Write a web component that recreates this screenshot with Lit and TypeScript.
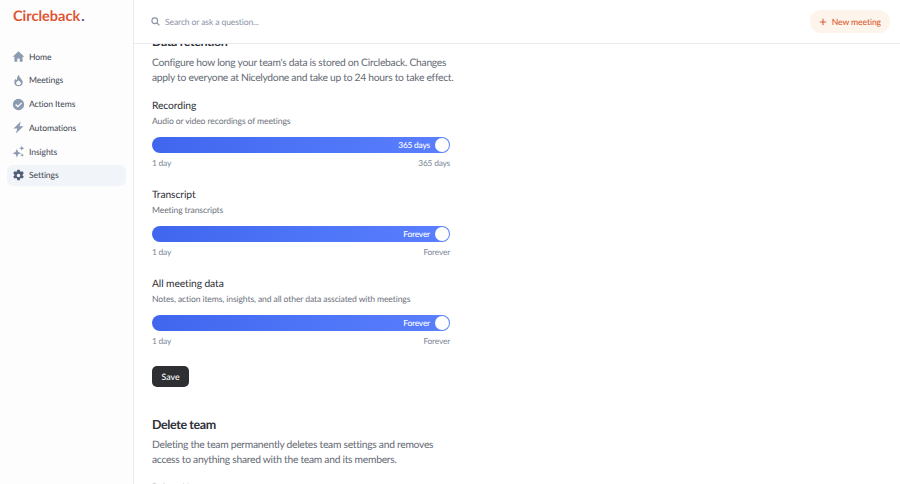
import { LitElement, css, html, svg } from 'lit';
import { customElement } from 'lit/decorators.js';

const navItems = [
  { label: 'Home', icon: svg`<path d="M8 1.500 .8 8.200h2.200V14.500h3.500v-4h3v4H13V8.200h2.200z"/>` },
  { label: 'Meetings', icon: svg`<path fill-rule="evenodd" d="M8.600 1c.3 2.300 1 3.200 2.200 4.500C12.200 7 13.200 8.200 13.200 10.200c0 3-2.300 4.900-5.200 4.900s-5.200-1.900-5.200-4.900c0-1.800.8-3.400 2-4.400.2 1 .6 1.600 1.300 2C6 5 6.800 2.500 8.600 1zM8 7.800c-.6 1.200-3 1.900-3 3.300 0 1.500 1.300 2.500 3 2.500s3-1 3-2.500c0-1.400-2.400-2.100-3-3.300z"/>` },
  { label: 'Action Items', icon: svg`<path fill-rule="evenodd" d="M8 1a7 7 0 1 1 0 14A7 7 0 0 1 8 1zm3.400 4.400L7.100 9.500 5 7.400 3.900 8.500l3.200 3.200 5.400-5.200z"/>` },
  { label: 'Automations', icon: svg`<path d="M10.800 .5 1.800 9.200h4.700L4.800 15.500 14.200 6.500H9.300z"/>` },
  { label: 'Insights', icon: svg`<path d="M6 4.500l1.600 4L11.500 10l-3.900 1.500L6 15.500l-1.600-4L.5 10l3.900-1.500zM12 .8l.9 2.300 2.300.9-2.300.9L12 7.200l-.9-2.300L8.800 4l2.300-.9zM12.500 10.300l.7 1.500 1.500.7-1.500.7-.7 1.500-.7-1.500-1.500-.7 1.500-.7z"/>` },
  { label: 'Settings', active: true, icon: svg`<path fill-rule="evenodd" d="M9.500 .8l.4 2c.4.200.8.400 1.100.6l2-.6 1.500 2.500-1.500 1.400c.1.400.1.800 0 1.200l1.500 1.400-1.500 2.500-2-.6c-.3.200-.7.400-1.100.6l-.4 2h-3l-.4-2c-.4-.2-.8-.4-1.100-.6l-2 .6-1.500-2.500 1.500-1.400c-.1-.4-.1-.8 0-1.200L1.500 5.300 3 2.800l2 .6c.3-.2.700-.4 1.100-.6l.4-2zM8 5.800a2.200 2.200 0 1 0 0 4.400 2.200 2.200 0 0 0 0-4.400z"/>` },
];

const retention = [
  { title: 'Recording', hint: 'Audio or video recordings of meetings', value: '365 days' },
  { title: 'Transcript', hint: 'Meeting transcripts', value: 'Forever' },
  { title: 'All meeting data', hint: 'Notes, action items, insights, and all other data assciated with meetings', value: 'Forever' },
];

@customElement('app-root')
export class AppRoot extends LitElement {
  static styles = css`
    :host {
      display: flex;
      width: 900px;
      height: 484px;
      overflow: hidden;
      background: #fff;
      font-family: 'Lato', 'Liberation Sans', sans-serif;
      color: #33363d;
      text-rendering: geometricPrecision;
    }

    .sidebar {
      flex: 0 0 134px;
      box-sizing: border-box;
      border-right: 1px solid #e8ebef;
      background: #fdfdfe;
      padding: 0 7px;
    }

    .logo {
      height: 46px;
      padding: 7px 0 0 6px;
      box-sizing: border-box;
      font-size: 14.500px;
      font-weight: 700;
      line-height: 20px;
      color: #df5430;
    }

    .logo span {
      margin-left: 1px;
      color: #46597a;
    }

    nav {
      display: flex;
      flex-direction: column;
      gap: 2.800px;
    }

    .item {
      display: flex;
      align-items: center;
      gap: 4px;
      height: 21px;
      padding: 0 5px;
      border-radius: 6px;
      font-size: 8.600px;
      letter-spacing: -0.1px;
      color: #434750;
    }

    .item svg {
      width: 13px;
      height: 13px;
      fill: #8d9bb0;
    }

    .item.active {
      background: #f1f4f9;
    }

    .item.active svg {
      fill: #4f5d75;
    }

    main {
      flex: 1;
      min-width: 0;
      display: flex;
      flex-direction: column;
    }

    header {
      flex: 0 0 44px;
      box-sizing: border-box;
      display: flex;
      align-items: center;
      justify-content: space-between;
      padding: 0 10px 0 17px;
      border-bottom: 1px solid #e8ebef;
      background: #fff;
      position: relative;
      z-index: 1;
    }

    .search {
      display: flex;
      align-items: center;
      gap: 5px;
      font-size: 8.600px;
      letter-spacing: -0.13px;
      color: #8b93a7;
    }

    .search svg {
      width: 9px;
      height: 9px;
      fill: none;
      stroke: #8b93a7;
      stroke-width: 1.500;
    }

    .new {
      display: flex;
      align-items: center;
      gap: 5px;
      height: 23px;
      padding: 0 9px;
      border-radius: 11.500px;
      background: #fdf4ec;
      color: #db5b30;
      font-size: 8.600px;
      font-weight: 500;
      letter-spacing: -0.1px;
    }

    .new svg {
      width: 8px;
      height: 8px;
      stroke: #db5b30;
      stroke-width: 1.300;
    }

    .scroll {
      flex: 1;
      min-height: 0;
      overflow: hidden;
      padding-left: 18px;
    }

    .content {
      width: 298px;
      margin-top: -12px;
    }

    h2 {
      margin: 0;
      font-size: 12.500px;
      font-weight: 700;
      line-height: 20px;
      letter-spacing: -0.4px;
      color: #2f3238;
    }

    .intro {
      margin: 4px -4px 0 0;
      font-size: 10.300px;
      line-height: 15px;
      letter-spacing: -0.28px;
      color: #666b75;
    }

    .group {
      margin-top: 18px;
    }

    .intro + .group {
      margin-top: 13px;
    }

    .group h3 {
      margin: 0;
      font-size: 10.300px;
      font-weight: 400;
      line-height: 14px;
      letter-spacing: -0.1px;
      color: #2f3238;
    }

    .hint {
      margin-top: 2px;
      font-size: 8.600px;
      line-height: 12px;
      letter-spacing: -0.115px;
      color: #6d727c;
    }

    .bar {
      display: flex;
      align-items: center;
      justify-content: flex-end;
      gap: 5px;
      height: 16px;
      margin-top: 10px;
      padding-right: 1px;
      border-radius: 8px;
      background: linear-gradient(90deg, #4066ee, #5a80ff);
      color: #fff;
      font-size: 8.400px;
      font-weight: 500;
      letter-spacing: -0.2px;
    }

    .knob {
      width: 14px;
      height: 14px;
      border-radius: 50%;
      background: #fff;
    }

    .scale {
      display: flex;
      justify-content: space-between;
      margin-top: 4px;
      font-size: 8.400px;
      line-height: 13px;
      letter-spacing: -0.2px;
      color: #7c8798;
    }

    .save {
      display: flex;
      align-items: center;
      justify-content: center;
      width: 37px;
      height: 21px;
      margin-top: 18px;
      border-radius: 5px;
      background: #2e2f33;
      color: #fff;
      font-size: 8.800px;
      font-weight: 500;
    }

    .delete {
      margin-top: 28px;
    }

    .delete .intro {
      margin-top: 3px;
    }

    .danger {
      margin-top: 13px;
      font-size: 8.600px;
      line-height: 12px;
      color: #4a3b3b;
    }
  `;

  render() {
    return html`
      <aside class="sidebar">
        <div class="logo">Circleback<span>.</span></div>
        <nav>
          ${navItems.map(
            (item) => html`
              <div class="item ${item.active ? 'active' : ''}">
                <svg viewBox="0 0 16 16">${item.icon}</svg>${item.label}
              </div>
            `,
          )}
        </nav>
      </aside>
      <main>
        <header>
          <div class="search">
            <svg viewBox="0 0 12 12"><circle cx="5" cy="5" r="3.800"/><path d="M8 8l3.200 3.200"/></svg>
            Search or ask a question...
          </div>
          <div class="new">
            <svg viewBox="0 0 10 10"><path d="M5 1v8M1 5h8"/></svg>
            New meeting
          </div>
        </header>
        <div class="scroll">
          <div class="content">
            <h2>Data retention</h2>
            <p class="intro">
              Configure how long your team's data is stored on Circleback. Changes apply to everyone at Nicelydone and take up to 24 hours to take effect.
            </p>
            ${retention.map(
              (row) => html`
                <section class="group">
                  <h3>${row.title}</h3>
                  <div class="hint">${row.hint}</div>
                  <div class="bar">${row.value}<span class="knob"></span></div>
                  <div class="scale"><span>1 day</span><span>${row.value}</span></div>
                </section>
              `,
            )}
            <div class="save">Save</div>
            <section class="delete">
              <h2>Delete team</h2>
              <p class="intro">
                Deleting the team permanently deletes team settings and removes access to anything shared with the team and its members.
              </p>
              <div class="danger">Delete this team</div>
            </section>
          </div>
        </div>
      </main>
    `;
  }
}
